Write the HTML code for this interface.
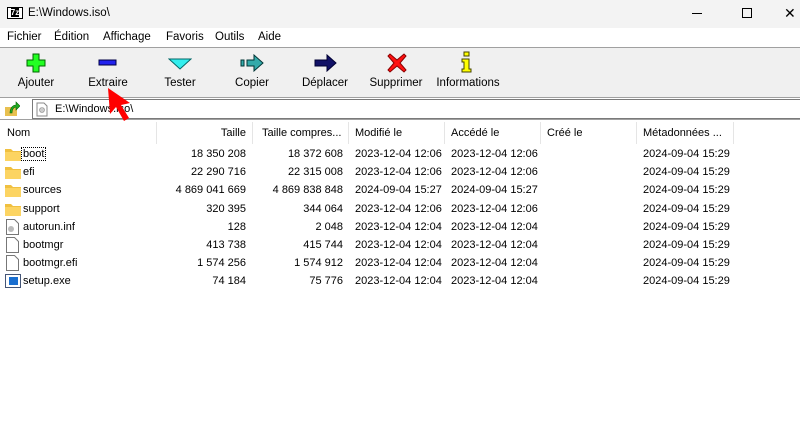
<!DOCTYPE html>
<html><head><meta charset="utf-8"><style>
*{margin:0;padding:0;box-sizing:border-box}
body{width:800px;height:428px;overflow:hidden;background:#fff;font-family:"Liberation Sans",sans-serif;font-size:11px;color:#000;position:relative}
.abs{position:absolute}
#title{left:0;top:0;width:800px;height:28px;background:#f3f3f3}
#menu{left:0;top:28px;width:800px;height:19px;background:#fff;font-size:11.5px}
#menu span{position:absolute;top:3px}
#tb{left:0;top:47px;width:800px;height:51px;background:#f0f0f0;border-top:1px solid #a0a0a0;border-bottom:1px solid #a0a0a0;font-size:11.5px}
.btn{position:absolute;top:29px;text-align:center;width:80px}
#addr{left:0;top:98px;width:800px;height:22px;background:#fff;border-bottom:1px solid #a0a0a0}
.hd{position:absolute;top:127px}
.sep{position:absolute;top:122px;width:1px;height:22px;background:#e5e5e5}
.r{position:absolute;text-align:right}
</style></head><body>
<div id="title" class="abs">
 <div class="abs" style="left:7px;top:7px;width:16px;height:12px;border:1px solid #000;background:#fff;font-size:8px;font-weight:bold;line-height:10px;text-align:center"><span style="background:#000;color:#fff">7z</span></div>
 <div class="abs" style="left:28px;top:7px;font-size:11.5px">E:\Windows.iso\</div>
 <div class="abs" style="left:692px;top:13px;width:10px;height:1px;background:#000"></div>
 <div class="abs" style="left:742px;top:8px;width:10px;height:10px;border:1px solid #000"></div>
 <div class="abs" style="left:784px;top:5px;font-size:14px">✕</div>
</div>
<div id="menu" class="abs">
 <span style="left:7px">Fichier</span><span style="left:54px">Édition</span><span style="left:103px">Affichage</span><span style="left:166px">Favoris</span><span style="left:215px">Outils</span><span style="left:258px">Aide</span>
</div>
<div id="tb" class="abs">
 <svg class="abs" style="left:26px;top:5px" width="20" height="20"><path d="M7 1h6v6h6v6h-6v6h-6v-6h-6v-6h6z" fill="#2f2" stroke="#060" stroke-width="1"/></svg>
 <svg class="abs" style="left:98px;top:10px" width="20" height="10"><rect x="1" y="2" width="17" height="5" fill="#22e" stroke="#004" /></svg>
 <svg class="abs" style="left:168px;top:9px" width="24" height="14"><path d="M1 2h22l-11 10z" fill="#3ee" stroke="#066"/></svg>
 <svg class="abs" style="left:240px;top:6px" width="24" height="18"><rect x="1" y="6" width="3" height="6" fill="#3aa" stroke="#033"/><path d="M7 6h7v-5l9 8-9 8v-5h-7z" fill="#3aa" stroke="#033"/></svg>
 <svg class="abs" style="left:313px;top:6px" width="24" height="18"><path d="M2 6h12v-5l9 8-9 8v-5h-12z" fill="#116" stroke="#003"/></svg>
 <svg class="abs" style="left:387px;top:5px" width="20" height="20"><path d="M3 1l7 6 7-6 2 2-6 7 6 7-2 2-7-6-7 6-2-2 6-7-6-7z" fill="#f11" stroke="#800"/></svg>
 <svg class="abs" style="left:460px;top:3px" width="12" height="24"><rect x="4" y="1" width="5" height="4" fill="#ff0" stroke="#440"/><path d="M2 8h7v10h2v3h-9v-3h2v-7h-2z" fill="#ff0" stroke="#440"/></svg>
 <div class="btn" style="left:-4px">Ajouter</div>
 <div class="btn" style="left:68px">Extraire</div>
 <div class="btn" style="left:140px">Tester</div>
 <div class="btn" style="left:212px">Copier</div>
 <div class="btn" style="left:285px">Déplacer</div>
 <div class="btn" style="left:356px">Supprimer</div>
 <div class="btn" style="width:110px;left:413px">Informations</div>
</div>
<div id="addr" class="abs">
 <svg class="abs" style="left:4px;top:3px" width="16" height="16"><rect x="1" y="6" width="12" height="9" fill="#e8c050"/><path d="M6 12c0-5 3-8 6-8v-3l4 4-4 4v-3c-2 0-4 2-4 6z" fill="#2a2" stroke="#060" stroke-width=".6"/></svg>
 <div class="abs" style="left:32px;top:1px;width:768px;height:20px;border:1px solid #7a7a7a;border-right:none"></div>
 <svg class="abs" style="left:36px;top:4px" width="12" height="15"><path d="M1 1h7l3 3v10h-10z" fill="#fff" stroke="#888"/><circle cx="6" cy="8" r="2.5" fill="#ccc" stroke="#888" stroke-width=".6"/></svg>
 <div class="abs" style="left:55px;top:5px">E:\Windows.iso\</div>
</div>
<svg class="abs" style="left:105px;top:86px" width="30" height="46"><path d="M3 2l2 26 6-7 8 14 5-3-8-13 9-2z" fill="#f00"/></svg>
<div class="hd" style="left:7px">Nom</div>
<div class="hd r" style="left:150px;width:96px">Taille</div>
<div class="hd" style="left:262px">Taille compres...</div>
<div class="hd" style="left:355px">Modifié le</div>
<div class="hd" style="left:451px">Accédé le</div>
<div class="hd" style="left:547px">Créé le</div>
<div class="hd" style="left:643px">Métadonnées ...</div>
<div class="sep" style="left:156px"></div><div class="sep" style="left:252px"></div><div class="sep" style="left:348px"></div><div class="sep" style="left:444px"></div><div class="sep" style="left:540px"></div><div class="sep" style="left:636px"></div><div class="sep" style="left:733px"></div>
<div id="rows"></div>
<script>
var d=[["boot","18 350 208","18 372 608","2023-12-04 12:06","2023-12-04 12:06","f"],
["efi","22 290 716","22 315 008","2023-12-04 12:06","2023-12-04 12:06","f"],
["sources","4 869 041 669","4 869 838 848","2024-09-04 15:27","2024-09-04 15:27","f"],
["support","320 395","344 064","2023-12-04 12:06","2023-12-04 12:06","f"],
["autorun.inf","128","2 048","2023-12-04 12:04","2023-12-04 12:04","g"],
["bootmgr","413 738","415 744","2023-12-04 12:04","2023-12-04 12:04","d"],
["bootmgr.efi","1 574 256","1 574 912","2023-12-04 12:04","2023-12-04 12:04","d"],
["setup.exe","74 184","75 776","2023-12-04 12:04","2023-12-04 12:04","e"]];
var h="";
d.forEach(function(r,i){var y=147+i*18.2,ty=y+1;
var ic=r[5]=="f"?'<svg class="abs" style="left:5px;top:'+(y)+'px" width="16" height="14"><path d="M0 2h6l2 2h8v10h-16z" fill="#f0c040"/><rect x="0" y="5" width="16" height="9" fill="#fcd462"/></svg>':
r[5]=="e"?'<svg class="abs" style="left:5px;top:'+y+'px" width="16" height="14"><rect x=".5" y=".5" width="15" height="13" fill="#fff" stroke="#457"/><rect x="4" y="3" width="9" height="8" fill="#1a6fd0"/></svg>':
'<svg class="abs" style="left:6px;top:'+(y-1)+'px" width="13" height="16"><path d="M.5 .5h8l4 4v11h-12z" fill="#fff" stroke="#777"/>'+(r[5]=="g"?'<circle cx="5" cy="10" r="3" fill="#bbb"/>':'')+'</svg>';
h+=ic+'<div class="abs" style="left:23px;top:'+ty+'px'+(i==0?';outline:1px dotted #000;padding:0 1px;left:22px':'')+'">'+r[0]+'</div>'+
'<div class="r" style="left:150px;width:96px;top:'+ty+'px">'+r[1]+'</div>'+
'<div class="r" style="left:250px;width:93px;top:'+ty+'px">'+r[2]+'</div>'+
'<div class="abs" style="left:355px;top:'+ty+'px">'+r[3]+'</div>'+
'<div class="abs" style="left:451px;top:'+ty+'px">'+r[4]+'</div>'+
'<div class="abs" style="left:643px;top:'+ty+'px">2024-09-04 15:29</div>';});
document.getElementById("rows").innerHTML=h;
</script>
</body></html>
